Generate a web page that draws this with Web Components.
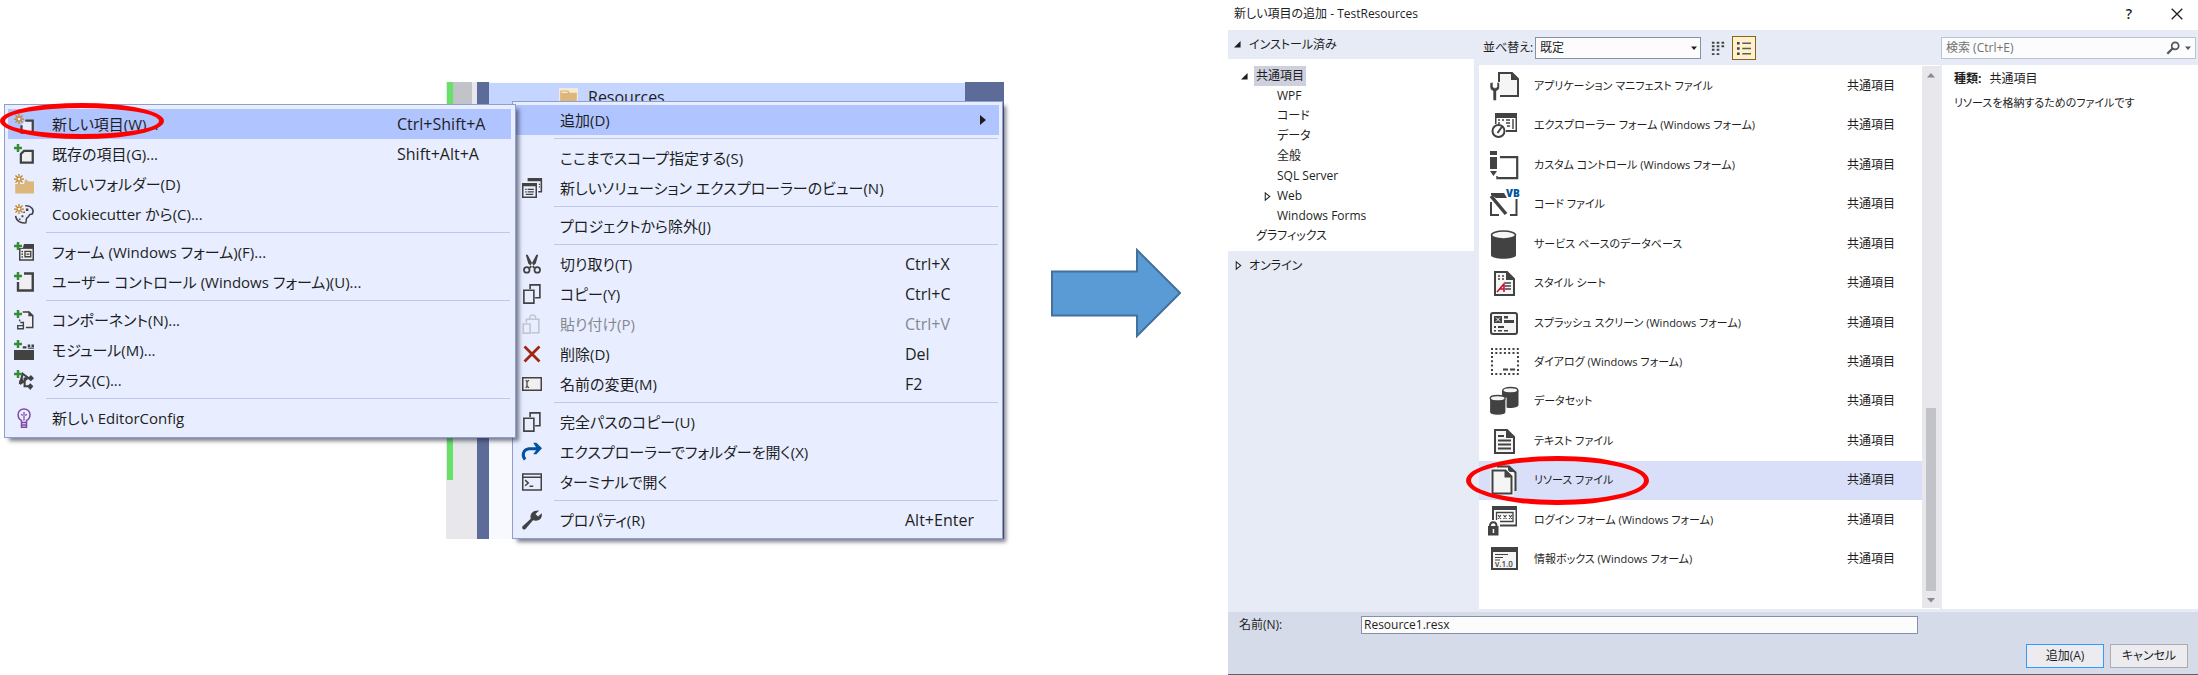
<!DOCTYPE html>
<html lang="ja">
<head>
<meta charset="utf-8">
<title>新しい項目の追加 - TestResources</title>
<style>
  body {
    margin: 0;
    min-height: 100vh;
    background: #fff;
    color: #1e1e1e;
    font-family: "Open Sans", "Noto Sans CJK JP", sans-serif;
    font-feature-settings: "palt";
  }
</style>
</head>
<body>
<how-to-page>
  <menu-scene slot="before">
    <context-menu class="parent" slot="parent" label="ソリューション エクスプローラー">
      <menu-entry active submenu>追加(D)</menu-entry>
      <menu-line></menu-line>
      <menu-entry>ここまでスコープ指定する(S)</menu-entry>
      <menu-entry icon="views">新しいソリューション エクスプローラーのビュー(N)</menu-entry>
      <menu-line></menu-line>
      <menu-entry>プロジェクトから除外(J)</menu-entry>
      <menu-line></menu-line>
      <menu-entry icon="cut" keys="Ctrl+X">切り取り(T)</menu-entry>
      <menu-entry icon="copy" keys="Ctrl+C">コピー(Y)</menu-entry>
      <menu-entry icon="paste" keys="Ctrl+V" disabled>貼り付け(P)</menu-entry>
      <menu-entry icon="delete" keys="Del">削除(D)</menu-entry>
      <menu-entry icon="rename" keys="F2">名前の変更(M)</menu-entry>
      <menu-line></menu-line>
      <menu-entry icon="copy">完全パスのコピー(U)</menu-entry>
      <menu-entry icon="open">エクスプローラーでフォルダーを開く(X)</menu-entry>
      <menu-entry icon="terminal">ターミナルで開く</menu-entry>
      <menu-line></menu-line>
      <menu-entry icon="wrench" keys="Alt+Enter">プロパティ(R)</menu-entry>
    </context-menu>
    <context-menu class="child" slot="child" label="追加">
      <menu-entry icon="newitem" keys="Ctrl+Shift+A" active>新しい項目(W)...</menu-entry>
      <menu-entry icon="existing" keys="Shift+Alt+A">既存の項目(G)...</menu-entry>
      <menu-entry icon="newfolder">新しいフォルダー(D)</menu-entry>
      <menu-entry icon="cookie">Cookiecutter から(C)...</menu-entry>
      <menu-line></menu-line>
      <menu-entry icon="form">フォーム (Windows フォーム)(F)...</menu-entry>
      <menu-entry icon="usercontrol">ユーザー コントロール (Windows フォーム)(U)...</menu-entry>
      <menu-line></menu-line>
      <menu-entry icon="component">コンポーネント(N)...</menu-entry>
      <menu-entry icon="module">モジュール(M)...</menu-entry>
      <menu-entry icon="class">クラス(C)...</menu-entry>
      <menu-line></menu-line>
      <menu-entry icon="bulb">新しい EditorConfig</menu-entry>
    </context-menu>
  </menu-scene>
  <step-arrow slot="arrow"></step-arrow>
  <add-item-dialog slot="after">
    <span slot="title">新しい項目の追加 - TestResources</span>
    <template-tree slot="tree"></template-tree>
    <template-item icon="manifest">アプリケーション マニフェスト ファイル</template-item>
    <template-item icon="explorer">エクスプローラー フォーム (Windows フォーム)</template-item>
    <template-item icon="custom">カスタム コントロール (Windows フォーム)</template-item>
    <template-item icon="code">コード ファイル</template-item>
    <template-item icon="db">サービス ベースのデータベース</template-item>
    <template-item icon="style">スタイル シート</template-item>
    <template-item icon="splash">スプラッシュ スクリーン (Windows フォーム)</template-item>
    <template-item icon="dialog">ダイアログ (Windows フォーム)</template-item>
    <template-item icon="dataset">データセット</template-item>
    <template-item icon="text">テキスト ファイル</template-item>
    <template-item icon="resource" selected>リソース ファイル</template-item>
    <template-item icon="login">ログイン フォーム (Windows フォーム)</template-item>
    <template-item icon="about">情報ボックス (Windows フォーム)</template-item>
    <item-details slot="details" kind="共通項目">リソースを格納するためのファイルです</item-details>
  </add-item-dialog>
</how-to-page>

<script>
const K = '#424242';
const plus = '<path d="M3.2 0v6.4M0 3.2h6.4" stroke="#388a34" stroke-width="2" fill="none"/>';
const spark = '<path d="M4 0v8M0 4h8M1.2 1.2l5.6 5.6M6.8 1.2L1.2 6.8" stroke="#c27d1a" stroke-width="1"/><circle cx="4" cy="4" r="1.1" fill="#fff"/>';
const pageShape = '<path d="M7 5h12l7 7v16H7z" fill="#f5f5f5" stroke="#424242" stroke-width="2"/><path d="M18 4v9h8z" fill="#424242"/>';

/* 16-unit glyphs are used in menus, 32-unit glyphs in the template list */
const ICONS = {
  newitem: [16, `<path d="M9 5.2h6v9.6H6V9" fill="#e8eeff" stroke="${K}" stroke-width="1.8"/>${spark}`],
  existing: [16, `<path d="M8 5.5h7v9.3H5.5V8z" fill="#f0eff1" stroke="${K}" stroke-width="1.8"/>${plus}`],
  newfolder: [16, `<path d="M1 15.5V8h7l1-4 3 2h4v9.500z" fill="#dcb67a"/>${spark}`],
  cookie: [16, `<path d="M9 1.500c5-.5 7.500 3.500 5.600 6.500l-2 .5-1 1.500-1.600 1.500-.5 3.500C5 15.700 1.500 13 1.300 9.500" fill="none" stroke="${K}" stroke-width="1.200"/><path d="M9.500 3.500h2v2h-2zM6 9h1.500v1.500H6zM4 11.500h1.200v1.200H4zM7.500 6h1.200v1.200H7.500z" fill="${K}"/>${spark}`],
  form: [16, `<path d="M8 1.500h8v3.200H7zM4 4.700h12V15H4z" fill="${K}"/><path d="M5.200 5.500h9.600v8.300H5.200z" fill="#f0eff1"/><path d="M6 7.500h1.200M6 9.700h1.200M6 12h1.200" stroke="${K}" stroke-width="1.200"/><path d="M8.800 7.500h4.600v4.300H8.800zM10 9.700h2.300" fill="none" stroke="${K}" stroke-width="1.100"/>${plus}`],
  usercontrol: [16, `<path d="M8 1.200h7v13.600H3.200V8" fill="#f0eff1" stroke="${K}" stroke-width="1.900"/>${plus}`],
  component: [16, `<path d="M7 1.500h5l3 3V14H9.500" fill="#f0eff1" stroke="${K}" stroke-width="1.200"/><path d="M11.500 1v4H15.500z" fill="${K}"/><path d="M3 12.500h4.500V15H3zM5 10h2.500v5M4.500 7.500v1.500" fill="none" stroke="${K}" stroke-width="1.100"/>${plus}`],
  module: [16, `<path d="M0 8h16v8H0zM7 5h3v1.700H7zM11 3.500h2v2h-2zM14 3.500h2v2h-2zM11 6h5v1h-5z" fill="${K}"/>${plus}`],
  class: [16, `<path d="M7 3l4 3-3 3-3 1zM8.500 6v7h3M9 6.500h4" fill="none" stroke="${K}" stroke-width="1.700"/><path d="M13.500 4L16 6.500 13.500 9 11 6.500zM13 10.500l2.500 2.500-2.500 3-2.500-3zM6.500 6l1.500 4-3 2-1-3z" fill="${K}"/>${plus}`],
  bulb: [16, '<path d="M6 11.500V10C3.800 9 3.300 7 3.300 5.200 3.300 2.800 5.300.7 8 .7s4.800 2.100 4.800 4.500C12.800 7 12.200 9 10 10v1.500zM6 13.500h4v1.800H6zM6 11v3M10 11v3" fill="none" stroke="#7f4aa5" stroke-width="1.200"/><path d="M5.700 5l1.200 1M8 3.200v2.500M10.300 5L9 6M8 6v4" stroke="#7f4aa5" stroke-width="1"/>'],
  views: [16, `<path d="M5 .5h10.500V11H13" fill="none" stroke="${K}" stroke-width="1.200"/><path d="M4.500 0H16v2.500H4.500zM0 4h12v2.500H0z" fill="${K}"/><path d="M.6 5h10.800v10.400H.6z" fill="none" stroke="${K}" stroke-width="1.200"/><path d="M2.500 9h1.200M2.500 11h1.200M4.500 9H9.500M4.500 11H9.500M3 13h6M13.500 5h1M13.500 7h1" stroke="${K}" stroke-width="1"/>`],
  cut: [16, `<path d="M3 .5l1.500 0L9 9l1.500 1.500-1 1L5 7.500zM13 .5l-1.500 0L7 9l-1.500 1.500 1 1L11 7.500z" fill="${K}"/><circle cx="3.800" cy="12.700" r="2.200" fill="none" stroke="${K}" stroke-width="1.400"/><circle cx="12.200" cy="12.700" r="2.200" fill="none" stroke="${K}" stroke-width="1.400"/>`],
  copy: [16, `<path d="M6.500 4V.7H14.300V11H10.500M1.500 5h8v10.300h-8z" fill="none" stroke="${K}" stroke-width="1.300"/>`],
  paste: [16, '<path d="M3.500 7V4.200H13.500V15H7.500M1 8h5.500v7.300H1zM6 4C6 1.500 7 .8 8.500.8S11 1.500 11 4" fill="none" stroke="#c3c6d2" stroke-width="1.300"/>'],
  delete: [16, '<path d="M2 2l12 12M14 2L2 14" stroke="#a1260d" stroke-width="2.200"/>'],
  rename: [16, `<path d="M.6 3h14.800v10H.6z" fill="#f0eff1" stroke="${K}" stroke-width="1.200"/><path d="M3 5l1 1v4l-1 1M5.500 5L4 6.300M4 9.700L5.500 11" fill="none" stroke="${K}" stroke-width="1"/>`],
  open: [16, '<path d="M2.500 14C0 11 .5 6.200 5.500 5.400H12" fill="none" stroke="#00539c" stroke-width="2.400"/><path d="M9 .5l2.500 0L16 5l-4.500 4.800H9L12 5.500z" fill="#00539c"/>'],
  terminal: [16, `<path d="M.6 1.600h14.800v12.800H.6zM.6 4.200h14.800" fill="none" stroke="${K}" stroke-width="1.200"/><path d="M2.500 6.500L5 8.800 2.500 11M6 11.300h3" fill="none" stroke="${K}" stroke-width="1.200"/>`],
  wrench: [16, `<path d="M13.500.5L10.800 3.200l2 2L15.700 2.500C16.500 5 15 8.500 11 8.500L8.800 8.200 2.800 15.200C1.500 16.500-.8 14.500.5 13L7 7C6 3 9 .2 13.500.5z" fill="${K}"/>`],
  folder: [16, '<path d="M0 0h16v16H0z" fill="#f4ead8"/><path d="M1 2h7l1 2h6v12H1z" fill="#dcb67a"/><path d="M2 3.200h5l.6 1H2z" fill="#f4ead8"/>'],

  manifest: [32, `<path d="M11 12V3h13l6 6v17H12" fill="#f5f5f5" stroke="${K}" stroke-width="2"/><path d="M23 2v8h7z" fill="${K}"/><path d="M2 13v4c0 2 1 3 3 4v9q2 1.500 3.500 0v-9c2-1 3-2 3-4v-4L9 12v5l-2 1-2-1v-5z" fill="${K}" stroke="#fff" stroke-width=".6"/>`],
  explorer: [32, `<path d="M7 4h22v19H18v-2h9.500V9H8.500v6H7z" fill="${K}"/><path d="M7 4h22v4H7z" fill="${K}"/><path d="M10 11h2M14 11h2M10 14h2M18 11h4M18 14h4M19 17h3M25 10v10" stroke="${K}" stroke-width="1.400" fill="none"/><circle cx="10.500" cy="22" r="6" fill="#fff" stroke="${K}" stroke-width="2"/><path d="M9.500 24l5-7" stroke="${K}" stroke-width="2"/>`],
  custom: [32, `<path d="M2 2h7v4H2zM2 8h7v12H2zM2 22h7l-3.500 5z" fill="${K}"/><path d="M12 8.200h17.200v21H9.500" fill="none" stroke="${K}" stroke-width="2.200"/><path d="M9 27v3.300" stroke="${K}" stroke-width="1.500"/>`],
  code: [32, `<path d="M3 5h13l3 5H8L3 7z" fill="${K}"/><path d="M3 8l15 18" stroke="${K}" stroke-width="3.500"/><path d="M3 14v13h8M28.500 11v16H22" fill="none" stroke="${K}" stroke-width="2"/><text x="18" y="9" font-size="10" font-weight="800" fill="#00539c">VB</text>`],
  db: [32, `<path d="M3 7v20c0 5 25 5 25 0V7z" fill="${K}"/><ellipse cx="15.500" cy="7" rx="12" ry="4" fill="#f5f5f5" stroke="${K}" stroke-width="1.500"/>`],
  style: [32, `${pageShape}<path d="M10 9h2M14 9h2M10 12h2M14 12h2M17 16h6M17 19h6M17 22h6" stroke="${K}" stroke-width="1.300"/><path d="M9 25l7-8v8M12 22h4" fill="none" stroke="#c8102e" stroke-width="1.600"/>`],
  splash: [32, `<rect x="3" y="6" width="26" height="21" rx="2" fill="#f5f5f5" stroke="${K}" stroke-width="2"/><path d="M6 9h8v7H6zM16 9h4v2.500h-4zM16 13h10v3H16zM6 19h2v2H6zM10 19h6v2h-6zM6 23h2v1.500H6zM10 23h4v1.500h-4zM16 23h4v1.500h-4z" fill="${K}"/><path d="M8 10.500l4 4M12 10.500l-4 4" stroke="#fff"/>`],
  dialog: [32, `<path d="M3 3h28M3 7h28M3 28h28" stroke="${K}" stroke-width="2" stroke-dasharray="2 2.300"/><path d="M4 10v17M30 10v17" stroke="${K}" stroke-width="2" stroke-dasharray="2 2.300"/><path d="M15 23.500h5M22 23.500h5" stroke="${K}" stroke-width="2"/>`],
  dataset: [32, `<path d="M14 5v15c0 4 16.500 4 16.500 0V5z" fill="${K}"/><ellipse cx="22.300" cy="5.200" rx="7.500" ry="2.700" fill="#f5f5f5" stroke="${K}" stroke-width="1.300"/><path d="M1.500 13v14c0 4.500 16.500 4.500 16.500 0V13z" fill="${K}" stroke="#fff" stroke-width="1.200"/><ellipse cx="9.700" cy="13.200" rx="7.500" ry="2.700" fill="#f5f5f5" stroke="${K}" stroke-width="1.300"/>`],
  text: [32, `${pageShape}<path d="M10 11h6M10 15.500h13M10 19.500h13M10 23.500h13" stroke="${K}" stroke-width="1.900"/>`],
  resource: [32, `<path d="M9 2.500h12l6.500 6V27" fill="#f5f5f5" stroke="${K}" stroke-width="2"/><path d="M20 2v6h8z" fill="${K}"/><path d="M4.500 6.500h13l6 6v17h-19z" fill="#f5f5f5" stroke="#fff" stroke-width="4"/><path d="M4.500 6.500h13l6 6v17h-19z" fill="#f5f5f5" stroke="${K}" stroke-width="2"/><path d="M16.500 6v7.500H24z" fill="${K}"/>`],
  login: [32, `<path d="M4 2h25v20.500H4z" fill="${K}"/><path d="M6 6h21.500v14.500H6z" fill="#fff"/><path d="M8.500 8.500h16.500v9H8.500z" fill="#fff" stroke="${K}" stroke-width="1.300"/><path d="M10 11l3 4M13 11l-3 4M15.500 11l3 4M18.500 11l-3 4M21 11l3 4M24 11l-3 4" stroke="${K}" stroke-width="1.200"/><path d="M-1 16h13v16H-1z" fill="#fff"/><path d="M0 22h10.500v9.500H0z" fill="${K}"/><path d="M2 22c0-5 6.500-5 6.500 0" fill="none" stroke="${K}" stroke-width="2"/><path d="M4.700 25h1.500v4H4.700z" fill="#fff"/>`],
  about: [32, `<path d="M4 5h25v21H4z" fill="#f5f5f5" stroke="${K}" stroke-width="2"/><path d="M3 4h27v5H3z" fill="${K}"/><path d="M7 11.500h13M7 14.500h8M7 17h5" stroke="${K}" stroke-width="1.100"/><text x="7" y="24" font-size="8" font-weight="600" fill="${K}">v.1.0</text>`],

  expanded: [8, '<path d="M7.500 0v7.500H0z" fill="#1e1e1e"/>'],
  collapsed: [8, '<path d="M2 .8L6 4 2 7.200z" fill="#fff" stroke="#1e1e1e" stroke-width=".9"/>'],
  tiles: [16, `<path d="M1 2h3M6.500 2h3M12 2h3M1 6h3M6.500 6h3M12 6h3M1 10h3M6.500 10h3M1 15h3M6.500 15h3" stroke="${K}" stroke-width="2.200"/>`],
  rows: [16, `<path d="M0 2.500h3M0 8.500h3M0 14.500h3" stroke="${K}" stroke-width="3"/><path d="M6 2.500h10M6 8.500h10M6 14.500h10" stroke="#605c50" stroke-width="1.800"/>`],
  search: [16, '<circle cx="10.500" cy="5.500" r="4" fill="none" stroke="#53565e" stroke-width="2"/><path d="M7.500 8.500L1.500 14.500" stroke="#53565e" stroke-width="2.600"/>'],
  close: [12, '<path d="M.7.7l10.600 10.600M11.300.7L.7 11.300" stroke="#1e1e1e" stroke-width="1.300"/>'],
  down: [8, '<path d="M0 2h8L4 6.500z" fill="currentColor"/>'],
  up: [8, '<path d="M0 6.500h8L4 2z" fill="currentColor"/>'],
  right: [12, '<path d="M3 1l6 5-6 5z" fill="#1e1e1e"/>'],
};

const define = (name, render) => customElements.define(name, class extends HTMLElement {
  connectedCallback() {
    if (this.shadowRoot) return;
    this.attachShadow({ mode: 'open' }).innerHTML = render(this);
  }
});

define('vs-icon', el => {
  const [box, art] = ICONS[el.getAttribute('name')];
  return `<style>:host{display:block;flex:none;width:${box}px;height:${box}px}svg{display:block;width:100%;height:100%;overflow:visible}</style>
  <svg viewBox="0 0 ${box} ${box}" aria-hidden="true">${art}</svg>`;
});

define('how-to-page', () => `
  <style>
    :host{display:grid;grid-template-columns:1005fr 223fr 970fr;min-height:100vh}
  </style>
  <slot name="before"></slot><slot name="arrow"></slot><slot name="after"></slot>`);

define('menu-scene', () => `
  <style>
    :host{display:block;position:relative}
    .editor{position:absolute;left:446px;right:1px;top:82px;height:457px;display:flex;overflow:hidden}
    .track{width:31px;background:#e7e7ec;position:relative}
    .thumb{margin-left:7px;width:19px;height:26px;background:#c2c3c9}
    .changes{position:absolute;left:1px;top:0;width:6px;height:398px;background:#67e167}
    .gutter{width:12px;background:#5d6b99}
    .tree{flex:1;background:#f7f9fe}
    .row{display:flex;gap:10px;align-items:center;height:20px;padding:4px 0 0 70px;margin-top:1px;background:#c4d5ff;font-size:16px;line-height:20px}
    .row vs-icon{width:19px;height:19px}
    .edge{width:39px;background:#5d6b99}
    ::slotted(.parent){position:absolute;left:512px;top:101px;width:491px}
    ::slotted(.child){position:absolute;left:4px;top:104px;width:512px;--keys:114px}
    .mark{position:absolute;left:0;top:103px;width:164px;height:36px;box-sizing:border-box;border:5px solid #f00;border-radius:50%}
  </style>
  <div class="editor">
    <div class="track"><div class="thumb"></div><div class="changes"></div></div>
    <div class="gutter"></div>
    <div class="tree"><div class="row"><vs-icon name="folder"></vs-icon><span>Resources</span></div></div>
    <div class="edge"></div>
  </div>
  <slot name="parent"></slot><slot name="child"></slot>
  <div class="mark"></div>`);

define('context-menu', el => `
  <style>
    :host{display:block;box-sizing:border-box;border:1px solid #8e9fce;padding:3px;background:#e8eeff;box-shadow:4px 4px 4px -1px rgba(40,44,66,.6)}
    :host(.child){padding:4px 4px 4px 3px}
  </style>
  <div role="menu" aria-label="${el.getAttribute('label')}"><slot></slot></div>`);

define('menu-entry', el => {
  const icon = el.getAttribute('icon');
  const off = el.hasAttribute('disabled');
  return `
  <style>
    :host{display:block}
    button{all:unset;box-sizing:border-box;display:flex;align-items:center;width:100%;height:30px;padding-left:6px;font-size:16px;line-height:24px;white-space:nowrap;color:${off ? '#85878f' : '#1e1e1e'}}
    :host([active]) button{background:#b0c4ff}
    .icon{flex:none;width:38px}
    .icon vs-icon{width:20px;height:20px}
    .text{flex:1;font-size:15px}
    .keys{width:var(--keys,94px)}
    .more{margin-right:10px;width:12px}
  </style>
  <button role="menuitem" ${off ? 'disabled' : ''}>
    <span class="icon">${icon ? `<vs-icon name="${icon}"></vs-icon>` : ''}</span>
    <span class="text"><slot></slot></span>
    ${el.hasAttribute('keys') ? `<span class="keys">${el.getAttribute('keys')}</span>` : ''}
    ${el.hasAttribute('submenu') ? '<vs-icon class="more" name="right"></vs-icon>' : ''}
  </button>`;
});

define('menu-line', () => `
  <style>:host{display:block;padding:3px 1px 4px 38px}div{height:1px;background:#bec8ea}</style><div role="separator"></div>`);

define('step-arrow', () => `
  <style>:host{display:block;padding:248px 47px 0 46px}svg{display:block;width:100%}</style>
  <svg viewBox="0 0 130 90" aria-hidden="true"><path d="M1 23.500H86V2l43 43-43 43V67.500H1z" fill="#5b9bd5" stroke="#41719c" stroke-width="2"/></svg>`);

define('template-tree', () => {
  const row = (text, level, mark = '') =>
    `<li class="l${level}" role="treeitem">${mark ? `<vs-icon name="${mark}"></vs-icon>` : ''}<span>${text}</span></li>`;
  return `
  <style>
    :host{display:block;font-size:12px;line-height:20px}
    .head{display:flex;align-items:center;gap:8px;height:29px;padding-left:6px}
    .head vs-icon{width:7px;height:7px}
    .head .closed{width:9px;height:9px}
    .closed+span{margin-left:-2px}
    ul{margin:0;padding:7px 0 5px;list-style:none;background:#fff}
    li{display:flex;align-items:center;height:20px}
    .l1{padding-left:28px}.l2{padding-left:49px}
    li vs-icon{width:9px;height:9px;margin:0 5px 0 -14px}
    .l1:first-child span{background:#ced0de;padding:0 2px;margin:0 -2px}
    .l1:first-child vs-icon{width:7px;height:7px;margin:0 8px 0 -15px}
  </style>
  <div class="head"><vs-icon name="expanded"></vs-icon><span>インストール済み</span></div>
  <ul role="tree">
    ${row('共通項目', 1, 'expanded')}${row('WPF', 2)}${row('コード', 2)}${row('データ', 2)}${row('全般', 2)}
    ${row('SQL Server', 2)}${row('Web', 2, 'collapsed')}${row('Windows Forms', 2)}${row('グラフィックス', 1)}
  </ul>
  <div class="head"><vs-icon class="closed" name="collapsed"></vs-icon><span>オンライン</span></div>`;
});

define('template-item', el => `
  <style>
    :host{display:flex;flex:1;align-items:center;position:relative;padding-left:9px;font-size:12px;line-height:20px;white-space:nowrap}
    :host([selected]){background:#d9dff8}
    .name{flex:1;margin-left:14px;font-size:11px}
    .kind{width:75px}
    .mark{position:absolute;left:-13px;top:-5px;bottom:-5px;width:183px;box-sizing:border-box;border:5px solid #f00;border-radius:50%}
  </style>
  <vs-icon name="${el.getAttribute('icon')}"></vs-icon>
  <span class="name"><slot></slot></span><span class="kind">共通項目</span>
  ${el.hasAttribute('selected') ? '<div class="mark"></div>' : ''}`);

define('item-details', el => `
  <style>:host{display:block;padding:4px 12px;font-size:12px;line-height:20px}p{margin:0 0 4px}b{margin-right:8px}.note{font-size:11px}</style>
  <p><b>種類:</b>${el.getAttribute('kind')}</p><p class="note"><slot></slot></p>`);

define('add-item-dialog', () => `
  <style>
    :host{display:flex;flex-direction:column;box-sizing:border-box;min-height:100vh;background:#e6ebf5;border-bottom:1px solid #5d6070;font-size:12px;line-height:20px}
    *{box-sizing:border-box}
    button,input,select{font:inherit;font-feature-settings:inherit;color:inherit;margin:0;border-radius:0}
    header{display:flex;align-items:center;height:30px;padding:0 15px 2px 6px;background:#fff}
    header slot{display:block;flex:1}
    header button{all:unset;display:grid;place-items:center;width:12px;height:20px;margin-left:36px}
    .help{font-size:14px;font-weight:600}
    .main{flex:1;display:flex;padding-bottom:3px}
    .side{width:246px;margin-right:5px}
    .middle{flex:1;display:flex;flex-direction:column;min-width:0}
    .bar{display:flex;align-items:center;height:35px;padding-top:1px}
    .bar label{width:56px;padding-left:4px;white-space:nowrap}
    .drop{position:relative;width:166px}
    .drop select{appearance:none;display:block;width:100%;height:22px;padding:0 4px;border:1px solid #8591a8;background:#fcfcfc}
    .drop vs-icon{position:absolute;right:4px;top:8px;width:6px;height:6px}
    .view{display:grid;place-items:center;width:24px;height:24px;padding:0;border:1px solid transparent;background:none;margin-left:5px}
    .view vs-icon{width:14px;height:14px}
    .view.on{border-color:#8a6414;background:#fff1cf;margin-left:2px}
    .panes{flex:1;display:flex;background:#fff}
    .items{flex:1;display:flex;flex-direction:column;padding:1px 0 30px}
    .scroll{width:18px;margin:1px 0;background:#e7e7ec;display:flex;flex-direction:column;align-items:center;justify-content:space-between;padding:5px 0 4px;color:#868999}
    .thumb{width:10px;height:183px;margin:auto 0 5px;background:#c2c3c9}
    .right{width:257px;margin-left:1px;display:flex;flex-direction:column}
    .find{display:flex;align-items:center;width:255px;height:22px;border:1px solid #b9c3d6;background:#fcfcfc;color:#53565e;padding-right:4px}
    .find input{flex:1;min-width:0;border:0;padding:0 4px;background:none}
    .find input::placeholder{color:#717171;opacity:1}
    .find vs-icon{width:14px;height:14px;margin-right:5px}
    .find vs-icon:last-child{width:6px;height:6px;margin:0}
    .info{flex:1;background:#fff;border-left:1px solid #e6ebf5}
    footer{height:62px;background:#d6dbe9;padding:4px 10px 6px 11px}
    .name{display:flex;align-items:center;height:18px}
    .name label{width:122px}
    .name input{flex:1;height:18px;margin-right:270px;padding:0 2px;border:1px solid #8591a8;background:#fcfcfc}
    .actions{display:flex;justify-content:flex-end;gap:6px;margin-top:10px}
    .actions button{width:78px;height:24px;padding:0;border:1px solid #acacac;background:#ececf0}
    .actions .primary{border-color:#3399ff}
  </style>
  <header><slot name="title"></slot><button class="help" aria-label="ヘルプ">?</button><button aria-label="閉じる"><vs-icon name="close"></vs-icon></button></header>
  <div class="main">
    <div class="side"><slot name="tree"></slot></div>
    <div class="middle">
      <div class="bar">
        <label for="sort">並べ替え:</label>
        <span class="drop"><select id="sort"><option>既定</option></select><vs-icon name="down"></vs-icon></span>
        <button class="view" aria-label="タイル"><vs-icon name="tiles"></vs-icon></button>
        <button class="view on" aria-label="一覧"><vs-icon name="rows"></vs-icon></button>
      </div>
      <div class="panes">
        <div class="items" role="listbox"><slot></slot></div>
        <div class="scroll"><vs-icon name="up"></vs-icon><div class="thumb"></div><vs-icon name="down"></vs-icon></div>
      </div>
    </div>
    <div class="right">
      <div class="bar"><div class="find"><input type="search" aria-label="検索" placeholder="検索 (Ctrl+E)"><vs-icon name="search"></vs-icon><vs-icon name="down"></vs-icon></div></div>
      <div class="info"><slot name="details"></slot></div>
    </div>
  </div>
  <footer>
    <div class="name"><label for="file">名前(N):</label><input id="file" type="text" value="Resource1.resx"></div>
    <div class="actions"><button class="primary">追加(A)</button><button>キャンセル</button></div>
  </footer>`);
</script>
</body>
</html>
